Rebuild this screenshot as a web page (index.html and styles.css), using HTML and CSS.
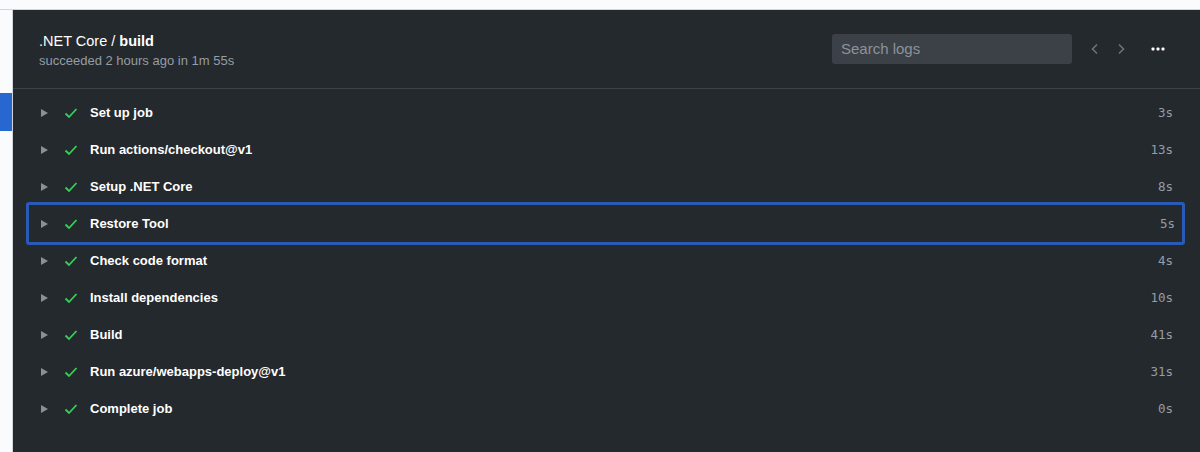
FILE: index.html
```html
<!DOCTYPE html>
<html>
<head>
<meta charset="utf-8">
<link rel="stylesheet" href="styles.css">
</head>
<body>
<div class="page">
  <div class="sidebar">
    <div class="side-active"></div>
  </div>
  <div class="panel">
    <div class="header">
      <div class="titles">
        <div class="title">.NET Core / <b>build</b></div>
        <div class="subtitle">succeeded 2 hours ago in 1m 55s</div>
      </div>
      <div class="tools">
        <div class="search">Search logs</div>
        <svg class="chev" width="16" height="16" viewBox="0 0 16 16"><path d="M10 3.5 5.5 8l4.5 4.5" fill="none" stroke="#6a737d" stroke-width="1.6"/></svg>
        <svg class="chev" width="16" height="16" viewBox="0 0 16 16"><path d="M6 3.5 10.5 8 6 12.5" fill="none" stroke="#6a737d" stroke-width="1.6"/></svg>
        <svg class="dots" width="16" height="16" viewBox="0 0 16 16"><rect x="1.5" y="6.5" width="3" height="3" rx="1" fill="#fff"/><rect x="6.5" y="6.5" width="3" height="3" rx="1" fill="#fff"/><rect x="11.5" y="6.5" width="3" height="3" rx="1" fill="#fff"/></svg>
      </div>
    </div>
    <div class="steps">
      <div class="step"><span class="tri"></span><svg class="check" width="14" height="14" viewBox="0 0 14 14"><path d="M1.5 7.5 5 11l7.5-8" fill="none" stroke="#34d058" stroke-width="1.8"/></svg><span class="name">Set up job</span><span class="dur">3s</span></div>
      <div class="step"><span class="tri"></span><svg class="check" width="14" height="14" viewBox="0 0 14 14"><path d="M1.5 7.5 5 11l7.5-8" fill="none" stroke="#34d058" stroke-width="1.8"/></svg><span class="name">Run actions/checkout@v1</span><span class="dur">13s</span></div>
      <div class="step"><span class="tri"></span><svg class="check" width="14" height="14" viewBox="0 0 14 14"><path d="M1.5 7.5 5 11l7.5-8" fill="none" stroke="#34d058" stroke-width="1.8"/></svg><span class="name">Setup .NET Core</span><span class="dur">8s</span></div>
      <div class="step focused"><span class="tri"></span><svg class="check" width="14" height="14" viewBox="0 0 14 14"><path d="M1.5 7.5 5 11l7.5-8" fill="none" stroke="#34d058" stroke-width="1.8"/></svg><span class="name">Restore Tool</span><span class="dur">5s</span></div>
      <div class="step"><span class="tri"></span><svg class="check" width="14" height="14" viewBox="0 0 14 14"><path d="M1.5 7.5 5 11l7.5-8" fill="none" stroke="#34d058" stroke-width="1.8"/></svg><span class="name">Check code format</span><span class="dur">4s</span></div>
      <div class="step"><span class="tri"></span><svg class="check" width="14" height="14" viewBox="0 0 14 14"><path d="M1.5 7.5 5 11l7.5-8" fill="none" stroke="#34d058" stroke-width="1.8"/></svg><span class="name">Install dependencies</span><span class="dur">10s</span></div>
      <div class="step"><span class="tri"></span><svg class="check" width="14" height="14" viewBox="0 0 14 14"><path d="M1.5 7.5 5 11l7.5-8" fill="none" stroke="#34d058" stroke-width="1.8"/></svg><span class="name">Build</span><span class="dur">41s</span></div>
      <div class="step"><span class="tri"></span><svg class="check" width="14" height="14" viewBox="0 0 14 14"><path d="M1.5 7.5 5 11l7.5-8" fill="none" stroke="#34d058" stroke-width="1.8"/></svg><span class="name">Run azure/webapps-deploy@v1</span><span class="dur">31s</span></div>
      <div class="step"><span class="tri"></span><svg class="check" width="14" height="14" viewBox="0 0 14 14"><path d="M1.5 7.5 5 11l7.5-8" fill="none" stroke="#34d058" stroke-width="1.8"/></svg><span class="name">Complete job</span><span class="dur">0s</span></div>
    </div>
  </div>
</div>
</body>
</html>
```
FILE: styles.css
```css
* { box-sizing: border-box; }
html, body { margin: 0; padding: 0; }
body {
  background: #fff;
  font-family: "Liberation Sans", Arial, sans-serif;
  width: 1200px;
  height: 452px;
  overflow: hidden;
}
.page {
  display: flex;
  height: 452px;
  padding-top: 10px;
  background: #fafbfc;
}
.sidebar {
  width: 13px;
  flex: none;
  background: #fafbfc;
  border-right: 1px solid #d1d5da;
  padding-top: 83px;
  position: relative;
}
.sidebar::after {
  content: "";
  position: absolute;
  top: -1px;
  left: 0;
  width: 1200px;
  height: 1px;
  background: #d1d5da;
}
.side-active {
  height: 38px;
  width: 12px;
  background: #2866d0;
}
.panel {
  flex: 1;
  background: #24292e;
  border-top: 1px solid #d1d5da;
  margin-top: -1px;
  display: flex;
  flex-direction: column;
}
.header {
  height: 79px;
  border-bottom: 1px solid #3c4249;
  display: flex;
  align-items: flex-start;
  justify-content: space-between;
  padding: 22px 34px 0 26px;
}
.title {
  color: #fff;
  font-size: 14.5px;
  line-height: 18px;
}
.title b { font-weight: bold; }
.subtitle {
  color: #959da5;
  font-size: 13px;
  line-height: 16px;
  margin-top: 3px;
}
.tools {
  display: flex;
  align-items: center;
  margin-top: 2px;
}
.search {
  width: 240px;
  height: 30px;
  background: #3c4147;
  border-radius: 3px;
  color: #8b939b;
  font-size: 15px;
  line-height: 30px;
  padding-left: 9px;
}
.chev { margin-left: 15px; }
.chev + .chev { margin-left: 10px; }
.dots { margin-left: 21px; }
.steps {
  padding: 5px 15px 0 14px;
  display: flex;
  flex-direction: column;
}
.step {
  height: 37px;
  display: flex;
  align-items: center;
  padding: 0 10px 0 12px;
  border: 2px solid transparent;
  border-radius: 3px;
}
.step.focused {
  height: 43px;
  margin: -3px 0 -3px -1px;
  border: 3px solid #2a5ab8;
  padding-left: 12px;
  padding-right: 7px;
}
.tri {
  width: 0;
  height: 0;
  border-top: 4.5px solid transparent;
  border-bottom: 4.5px solid transparent;
  border-left: 7px solid #8a9097;
  margin-right: 16px;
}
.check { margin-right: 12px; }
.name {
  color: #fff;
  font-weight: bold;
  font-size: 13px;
  flex: 1;
}
.dur {
  color: #959da5;
  font-family: "DejaVu Sans Mono", monospace;
  font-size: 12.5px;
}
```
